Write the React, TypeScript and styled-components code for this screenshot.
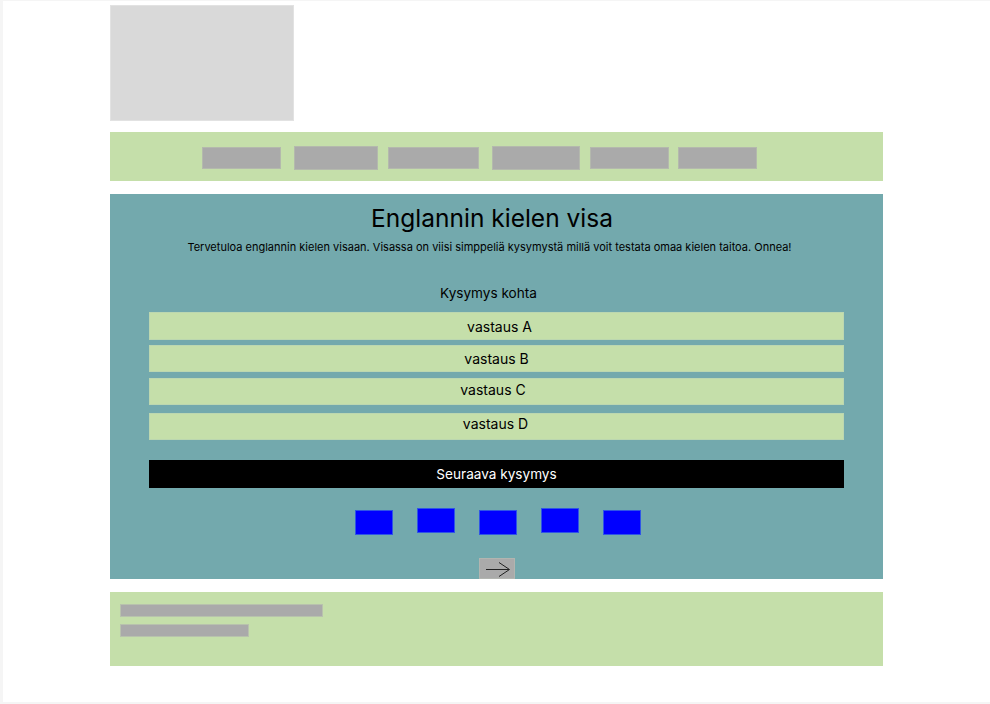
import { createGlobalStyle, styled } from "styled-components"

const GlobalStyle = createGlobalStyle`
  html, body {
    margin: 0;
    padding: 0;
    background: #f5f5f5;
    font-family: Inter, "Noto Sans", sans-serif;
  }
`

const Frame = styled.div`
  margin: 1px 0 0 3px;
  width: 987px;
  height: 701px;
  background: #ffffff;
  display: flex;
  flex-direction: column;
  padding: 4px 0 0 107px;
  box-sizing: border-box;
`

const Column = styled.div`
  width: 773px;
  display: flex;
  flex-direction: column;
`

const Logo = styled.div`
  width: 184px;
  height: 116px;
  background: #d9d9d9;
  border: 1px solid #e2e2e2;
  box-sizing: border-box;
`

const NavBar = styled.nav`
  margin-top: 11px;
  height: 49px;
  background: #c5dfaa;
  display: flex;
  align-items: center;
  padding: 3px 0 0 92px;
  box-sizing: border-box;
`

const NavItem = styled.div<{ $w: number; $gap: number; $tall?: boolean }>`
  width: ${(p) => p.$w}px;
  height: ${(p) => (p.$tall ? 24 : 22)}px;
  margin-left: ${(p) => p.$gap}px;
  background: #aaaaaa;
  border: 1px solid #b4b9ad;
  box-sizing: border-box;
`

const Main = styled.main`
  margin-top: 13px;
  height: 385px;
  background: #73a9ad;
  display: flex;
  flex-direction: column;
  align-items: center;
  padding: 8px 39px 0;
  box-sizing: border-box;
  color: #000;
`

const Title = styled.h1`
  margin: 0 9px 0 0;
  font-size: 24.5px;
  line-height: 32px;
  font-weight: 400;
`

const Intro = styled.p`
  margin: 6px 14px 0 0;
  font-size: 11px;
  line-height: 14px;
`

const Question = styled.h2`
  margin: 30px 16px 0 0;
  font-size: 13.6px;
  line-height: 18px;
  font-weight: 400;
`

const Answers = styled.div`
  margin-top: 10px;
  width: 100%;
  display: flex;
  flex-direction: column;
`

const Answer = styled.div<{ $gap: number; $h: number; $shift: number; $lift: number }>`
  margin-top: ${(p) => p.$gap}px;
  height: ${(p) => p.$h}px;
  background: #c5dfaa;
  border: 1px solid #bcd7b0;
  box-sizing: border-box;
  display: flex;
  align-items: center;
  justify-content: center;
  padding-left: ${(p) => Math.max(p.$shift, 0) * 2}px;
  padding-right: ${(p) => Math.max(-p.$shift, 0) * 2}px;
  padding-bottom: ${(p) => p.$lift * 2}px;
  font-size: 14px;
`

const NextButton = styled.div`
  margin-top: 20px;
  width: 100%;
  height: 28px;
  background: #000;
  color: #fff;
  display: flex;
  align-items: center;
  justify-content: center;
  font-size: 13.6px;
`

const Dots = styled.div`
  margin-top: 20px;
  height: 27px;
  display: flex;
  gap: 24px;
  padding-left: 2px;
`

const Dot = styled.div<{ $raised?: boolean }>`
  width: 38px;
  height: 25px;
  margin-top: ${(p) => (p.$raised ? 0 : 2)}px;
  background: #0000ff;
  border: 1px solid #2f55e6;
  box-sizing: border-box;
`

const ArrowButton = styled.div`
  margin-top: 23px;
  width: 36px;
  height: 21px;
  background: #aaaaaa;
  border: 1px solid #b2b5b0;
  box-sizing: border-box;
  display: flex;
  align-items: center;
  justify-content: center;
`

const Footer = styled.footer`
  margin-top: 13px;
  height: 74px;
  background: #c5dfaa;
  display: flex;
  flex-direction: column;
  gap: 7px;
  padding: 12px 10px;
  box-sizing: border-box;
`

const FooterLine = styled.div<{ $w: number }>`
  width: ${(p) => p.$w}px;
  height: 13px;
  background: #aaaaaa;
  border: 1px solid #b8c2ad;
  box-sizing: border-box;
`

const navItems = [
  { w: 79, gap: 0 },
  { w: 84, gap: 13, tall: true },
  { w: 91, gap: 10 },
  { w: 88, gap: 13, tall: true },
  { w: 79, gap: 10 },
  { w: 79, gap: 9 },
]

const answers = [
  { label: "vastaus A", gap: 0, h: 28, shift: 3, lift: 0 },
  { label: "vastaus B", gap: 5, h: 27, shift: 0, lift: 0 },
  { label: "vastaus C", gap: 6, h: 27, shift: -3.5, lift: 2 },
  { label: "vastaus D", gap: 8, h: 27, shift: -1, lift: 3 },
]

export default function App() {
  return (
    <>
      <GlobalStyle />
      <Frame>
        <Column>
          <Logo />
          <NavBar>
            {navItems.map((item, i) => (
              <NavItem key={i} $w={item.w} $gap={item.gap} $tall={item.tall} />
            ))}
          </NavBar>
          <Main>
            <Title>Englannin kielen visa</Title>
            <Intro>
              Tervetuloa englannin kielen visaan. Visassa on viisi simppeliä kysymystä millä voit testata omaa kielen taitoa. Onnea!
            </Intro>
            <Question>Kysymys kohta</Question>
            <Answers>
              {answers.map((a) => (
                <Answer key={a.label} $gap={a.gap} $h={a.h} $shift={a.shift} $lift={a.lift}>
                  {a.label}
                </Answer>
              ))}
            </Answers>
            <NextButton>Seuraava kysymys</NextButton>
            <Dots>
              {[false, true, false, true, false].map((r, i) => (
                <Dot key={i} $raised={r} />
              ))}
            </Dots>
            <ArrowButton>
              <svg width="30" height="19" viewBox="0 0 30 19" fill="none" stroke="#222" strokeWidth="1">
                <path d="M4 10.5 H27" />
                <path d="M17 3.5 L27.5 10.5 L17 17.5" />
              </svg>
            </ArrowButton>
          </Main>
          <Footer>
            <FooterLine $w={203} />
            <FooterLine $w={129} />
          </Footer>
        </Column>
      </Frame>
    </>
  )
}
